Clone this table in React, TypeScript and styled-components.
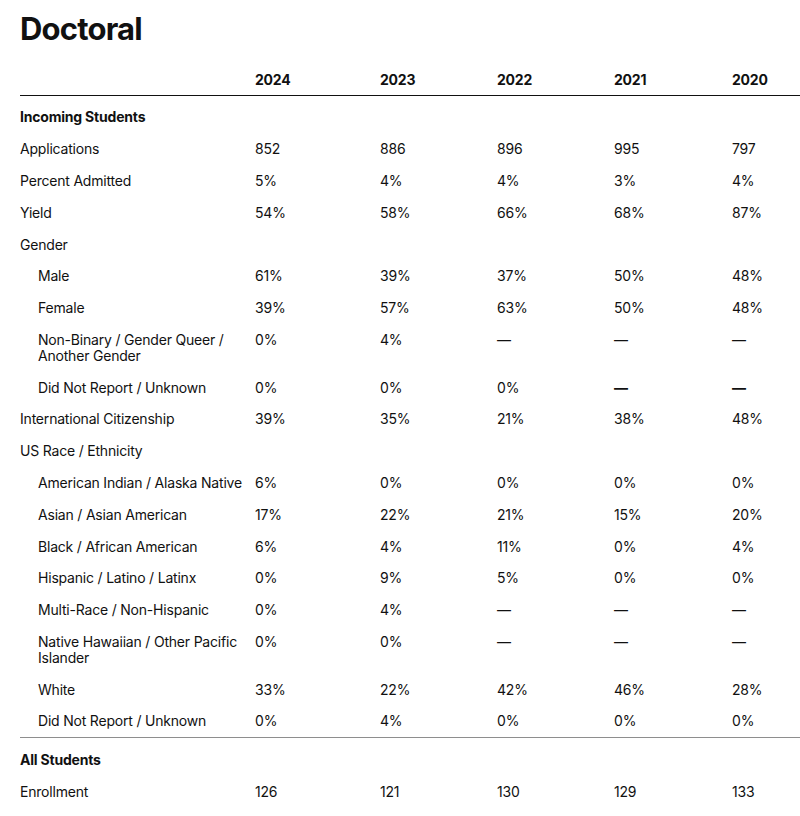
import React from "react";
import styled, { createGlobalStyle } from "styled-components";

const Global = createGlobalStyle`
  html, body { margin: 0; padding: 0; background: #fff; }
  body { font-family: Inter, "Noto Sans", "Liberation Sans", sans-serif; color: #111; }
`;

const Page = styled.div`
  padding: 13px 0 0 20px;
  width: 780px;
  overflow: hidden;
`;

const Title = styled.h1`
  margin: 0;
  font-size: 31px;
  line-height: 32px;
  font-weight: 700;
  letter-spacing: -0.8px;
`;

const Table = styled.div`
  margin-top: 27px;
  display: flex;
  flex-direction: column;
`;

const Row = styled.div<{ $head?: boolean; $section?: boolean; $rule?: "dark" | "grey" }>`
  display: grid;
  grid-template-columns: 235px 125px 117px 117px 118px 1fr;
  font-size: 14px;
  line-height: 16px;
  letter-spacing: -0.2px;
  padding: ${(p) => (p.$head ? "0 0 7px" : p.$section ? "13.4px 0 7.9px" : "7.9px 0 7.9px")};
  font-weight: ${(p) => (p.$head || p.$section ? 700 : 400)};
  border-bottom: ${(p) =>
    p.$rule === "dark" ? "1.5px solid #111" : p.$rule === "grey" ? "1px solid #8e8e8e" : "none"};
`;

const Label = styled.div<{ $indent?: boolean }>`
  padding-left: ${(p) => (p.$indent ? "18px" : "0")};
  padding-right: 2px;
`;

const Cell = styled.div<{ $strongDash?: boolean }>`
  font-weight: ${(p) => (p.$strongDash ? 800 : "inherit")};
`;

type RowData = {
  label: string;
  values?: string[];
  indent?: boolean;
  section?: boolean;
  rule?: "grey";
};

const rows: RowData[] = [
  { label: "Incoming Students", section: true },
  { label: "Applications", values: ["852", "886", "896", "995", "797"] },
  { label: "Percent Admitted", values: ["5%", "4%", "4%", "3%", "4%"] },
  { label: "Yield", values: ["54%", "58%", "66%", "68%", "87%"] },
  { label: "Gender" },
  { label: "Male", indent: true, values: ["61%", "39%", "37%", "50%", "48%"] },
  { label: "Female", indent: true, values: ["39%", "57%", "63%", "50%", "48%"] },
  { label: "Non-Binary / Gender Queer / Another Gender", indent: true, values: ["0%", "4%", "—", "—", "—"] },
  { label: "Did Not Report / Unknown", indent: true, values: ["0%", "0%", "0%", "—!", "—!"] },
  { label: "International Citizenship", values: ["39%", "35%", "21%", "38%", "48%"] },
  { label: "US Race / Ethnicity" },
  { label: "American Indian / Alaska Native", indent: true, values: ["6%", "0%", "0%", "0%", "0%"] },
  { label: "Asian / Asian American", indent: true, values: ["17%", "22%", "21%", "15%", "20%"] },
  { label: "Black / African American", indent: true, values: ["6%", "4%", "11%", "0%", "4%"] },
  { label: "Hispanic / Latino / Latinx", indent: true, values: ["0%", "9%", "5%", "0%", "0%"] },
  { label: "Multi-Race / Non-Hispanic", indent: true, values: ["0%", "4%", "—", "—", "—"] },
  { label: "Native Hawaiian / Other Pacific Islander", indent: true, values: ["0%", "0%", "—", "—", "—"] },
  { label: "White", indent: true, values: ["33%", "22%", "42%", "46%", "28%"] },
  { label: "Did Not Report / Unknown", indent: true, values: ["0%", "4%", "0%", "0%", "0%"], rule: "grey" },
  { label: "All Students", section: true },
  { label: "Enrollment", values: ["126", "121", "130", "129", "133"] },
];

const years = ["2024", "2023", "2022", "2021", "2020"];

export default function App() {
  return (
    <>
      <Global />
      <Page>
        <Title>Doctoral</Title>
        <Table>
          <Row $head $rule="dark">
            <Label />
            {years.map((y) => (
              <Cell key={y}>{y}</Cell>
            ))}
          </Row>
          {rows.map((r, i) => (
            <Row key={i} $section={r.section} $rule={r.rule}>
              <Label $indent={r.indent}>{r.label}</Label>
              {(r.values ?? ["", "", "", "", ""]).map((v, j) => {
                const strong = v.endsWith("!");
                return (
                  <Cell key={j} $strongDash={strong}>
                    {strong ? v.slice(0, -1) : v}
                  </Cell>
                );
              })}
            </Row>
          ))}
        </Table>
      </Page>
    </>
  );
}
